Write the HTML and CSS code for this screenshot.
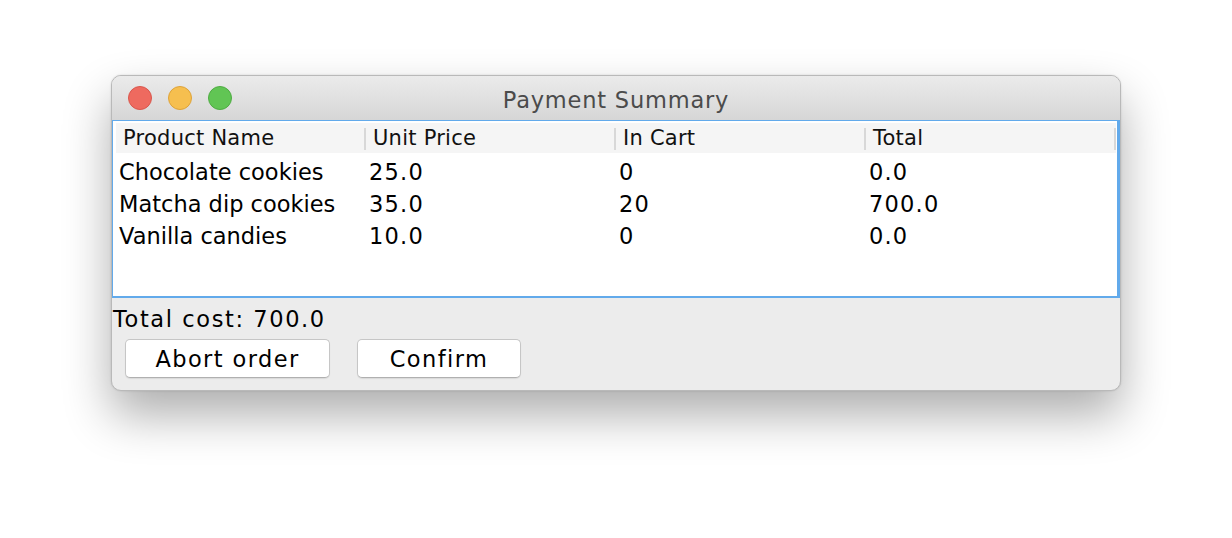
FILE: index.html
```html
<!DOCTYPE html>
<html>
<head>
<meta charset="utf-8">
<link rel="stylesheet" href="styles.css">
</head>
<body>
<div class="window">
  <div class="titlebar">
    <div class="lights">
      <span class="light red"></span>
      <span class="light yellow"></span>
      <span class="light green"></span>
    </div>
    <div class="title">Payment Summary</div>
  </div>
  <div class="content">
    <div class="table">
      <div class="thead">
        <div class="th">Product Name</div>
        <div class="th">Unit Price</div>
        <div class="th">In Cart</div>
        <div class="th">Total</div>
      </div>
      <div class="tbody">
        <div class="tr"><div class="td">Chocolate cookies</div><div class="td num">25.0</div><div class="td num">0</div><div class="td num">0.0</div></div>
        <div class="tr"><div class="td">Matcha dip cookies</div><div class="td num">35.0</div><div class="td num">20</div><div class="td num">700.0</div></div>
        <div class="tr"><div class="td">Vanilla candies</div><div class="td num">10.0</div><div class="td num">0</div><div class="td num">0.0</div></div>
      </div>
    </div>
    <div class="total">Total cost: 700.0</div>
    <div class="buttons">
      <button class="btn btn-abort">Abort order</button>
      <button class="btn btn-confirm">Confirm</button>
    </div>
  </div>
</div>
</body>
</html>
```
FILE: styles.css
```css
* { box-sizing: border-box; }
html, body { margin: 0; padding: 0; background: #ffffff; }
body {
  font-family: "DejaVu Sans", "Liberation Sans", sans-serif;
  padding: 75px 0 0 111px;
  width: 1232px;
  height: 538px;
  overflow: hidden;
}
.window {
  width: 1010px;
  height: 316px;
  border: 1px solid #b9b9b9;
  border-radius: 10px;
  background: #ececec;
  overflow: hidden;
  box-shadow: 0 24px 48px rgba(0,0,0,0.32), 0 0 2px rgba(0,0,0,0.15);
  display: flex;
  flex-direction: column;
}
.titlebar {
  height: 44px;
  background: linear-gradient(#ebebeb, #d6d6d6);
  display: flex;
  align-items: center;
  position: relative;
  flex: none;
}
.lights {
  display: flex;
  gap: 16px;
  padding-left: 16px;
}
.light {
  width: 24px;
  height: 24px;
  border-radius: 50%;
  display: block;
}
.red { background: #ee6a5f; border: 1px solid #d9574d; }
.yellow { background: #f6bf4f; border: 1px solid #dea33a; }
.green { background: #61c554; border: 1px solid #4fac43; }
.title {
  position: absolute;
  left: 0; right: 0; top: 0; bottom: 0;
  display: flex;
  align-items: center;
  justify-content: center;
  font-size: 22.5px;
  letter-spacing: 0.8px;
  color: #4b4b4b;
  padding-top: 4px;
}
.content {
  flex: 1;
  display: flex;
  flex-direction: column;
}
.table {
  height: 178px;
  background: #ffffff;
  border: 2px solid #62aaeb;
  border-left-width: 1px;
  border-right-width: 3px;
  border-top-width: 1px;
  padding-top: 2px;
  padding-left: 3px;
  flex: none;
}
.thead {
  display: grid;
  grid-template-columns: 250px 250px 250px 250px;
  height: 30px;
  background: #f5f5f5;
  width: 1000px;
}
.th {
  font-size: 21px;
  letter-spacing: 0.25px;
  color: #111;
  padding-left: 7px;
  line-height: 30px;
  position: relative;
}
.th::after {
  content: "";
  position: absolute;
  right: 0;
  top: 5px;
  width: 2px;
  height: 22px;
  background: #d8d8d8;
}
.tbody { padding-top: 3px; }
.tr {
  display: grid;
  grid-template-columns: 250px 250px 250px 250px;
  height: 32px;
}
.td {
  font-size: 22.5px;
  letter-spacing: 0;
  line-height: 32px;
  color: #000;
  padding-left: 3px;
}
.td.num { letter-spacing: 1.2px; }
.total {
  font-size: 22.5px;
  letter-spacing: 1.6px;
  color: #000;
  line-height: 26px;
  padding-top: 8px;
  padding-left: 1px;
}
.buttons {
  display: flex;
  gap: 27px;
  padding-left: 13px;
  padding-top: 7px;
}
.btn {
  font-family: inherit;
  font-size: 22.5px;
  letter-spacing: 1.4px;
  color: #000;
  background: #ffffff;
  border: 1px solid #c6c6c6;
  border-bottom-color: #b0b0b0;
  border-radius: 5px;
  height: 39px;
  padding: 0;
  box-shadow: 0 1px 1px rgba(0,0,0,0.08);
}
.btn-abort { width: 205px; }
.btn-confirm { width: 164px; }
```
